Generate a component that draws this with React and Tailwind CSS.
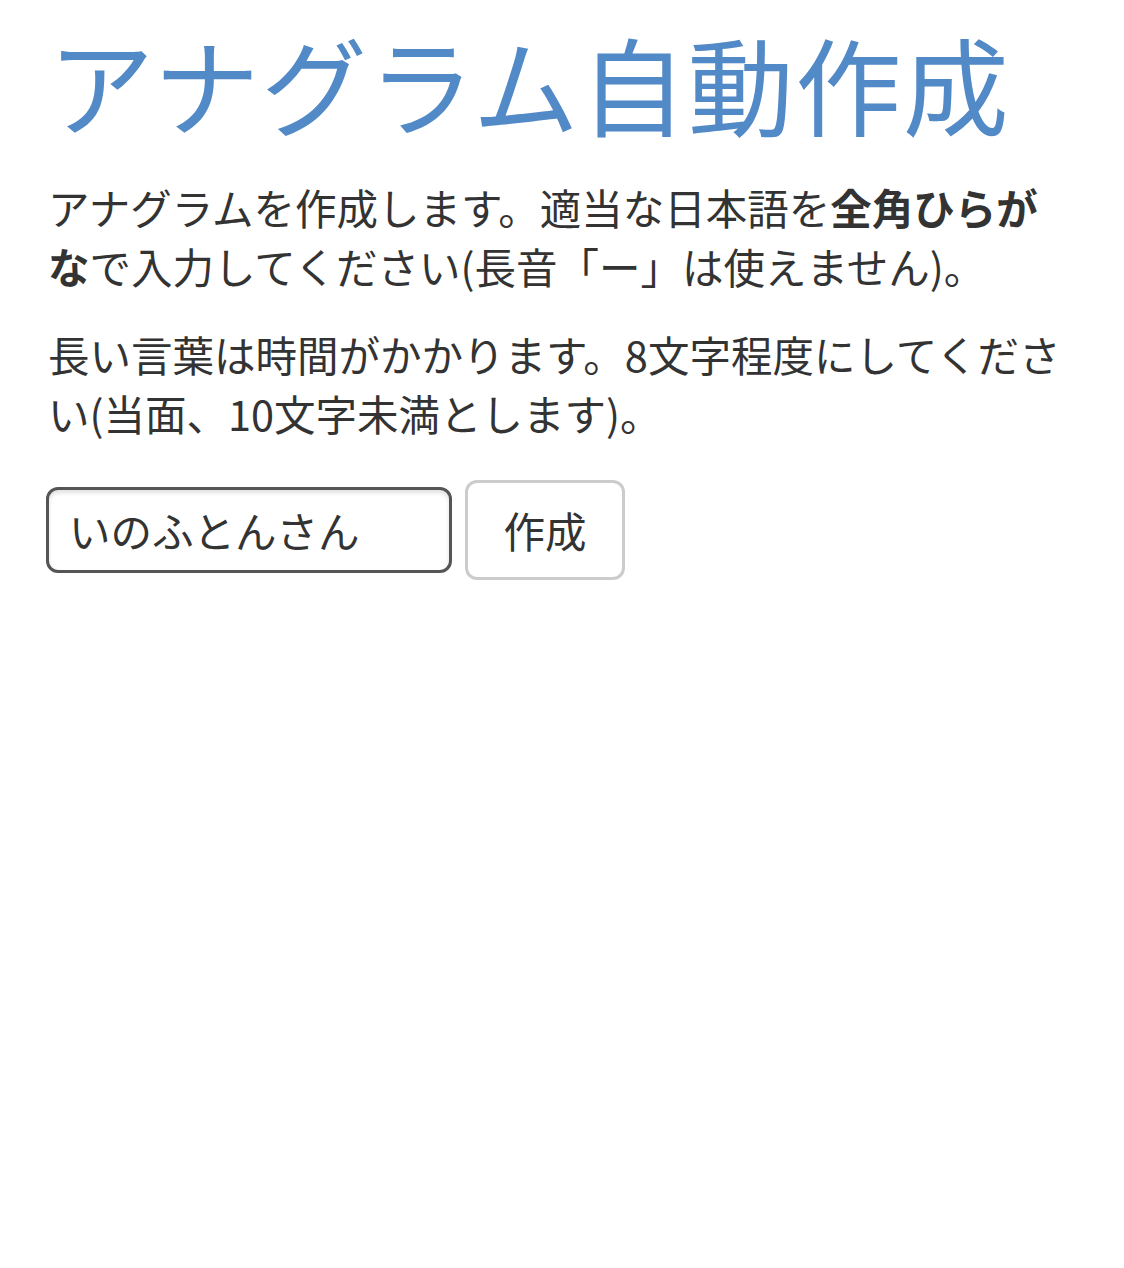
import React, { useState } from 'react'

const App = () => {
    const [word, setWord] = useState('いのふとんさん')

    return (
        <div className="min-h-screen bg-white px-12 text-[#333] font-['Noto_Sans_CJK_JP','Noto_Sans',sans-serif]">
            <h1 className="pt-[24px] text-[106px] font-normal leading-[1.1] tracking-[1.5px] text-[#5289c7] whitespace-nowrap">
                アナグラム自動作成
            </h1>

            <p className="mt-[37px] text-[41.5px] leading-[1.42]">
                アナグラムを作成します。適当な日本語を<b className="font-bold">全角ひらがな</b>で入力してください(長音「ー」は使えません)。
            </p>
            <p className="mt-[30px] text-[41.5px] leading-[1.42]">
                長い言葉は時間がかかります。8文字程度にしてください(当面、10文字未満とします)。
            </p>

            <div className="mt-[37px] flex items-center gap-[13px]">
                <input
                    value={word}
                    onChange={(e) => setWord(e.target.value)}
                    className="h-[86px] w-[406px] rounded-[12px] border-[3px] border-[#555] bg-white px-5 text-[41.5px] text-[#333] shadow-[inset_0_3px_4px_rgba(0,0,0,0.12)] outline-none -ml-[2px]"
                />
                <button className="h-[100px] w-[160px] rounded-[12px] border-[3px] border-[#ccc] bg-white text-[41.5px] text-[#333]">
                    作成
                </button>
            </div>
        </div>
    )
}

export default App
